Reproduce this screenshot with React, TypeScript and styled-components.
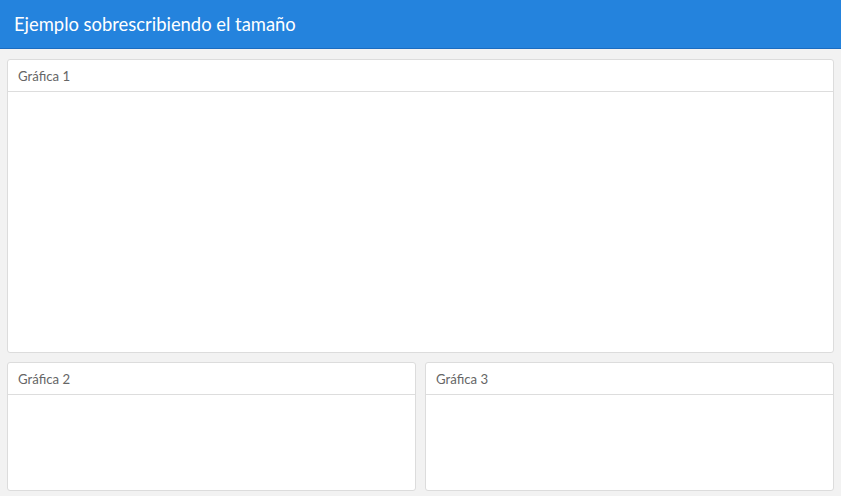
import React from "react";
import styled, { createGlobalStyle } from "styled-components";

const Global = createGlobalStyle`
  html, body { margin: 0; padding: 0; }
  body {
    background: #f2f2f2;
    font-family: Lato, "Open Sans", "Liberation Sans", sans-serif;
  }
`;

const Page = styled.div`
  display: flex;
  flex-direction: column;
  height: 496px;
`;

const Navbar = styled.header`
  height: 48px;
  flex: none;
  background: #2483dd;
  border-bottom: 1px solid #1b6cc0;
  display: flex;
  align-items: center;
  padding: 0 14px;
  box-sizing: content-box;
`;

const Title = styled.h1`
  margin: 0;
  font-size: 18.4px;
  font-weight: 400;
  color: #ffffff;
`;

const Main = styled.main`
  flex: 1;
  display: flex;
  flex-direction: column;
  gap: 9px;
  padding: 10px 7px 5px 7px;
  min-height: 0;
`;

const Row = styled.div<{ $h: number }>`
  display: flex;
  gap: 9px;
  height: ${(p) => p.$h}px;
  flex: none;
`;

const Card = styled.section`
  flex: 1;
  display: flex;
  flex-direction: column;
  background: #ffffff;
  border: 1px solid #dcdcdc;
  border-radius: 3px;
  box-sizing: border-box;
  overflow: hidden;
`;

const CardHeader = styled.div`
  height: 31px;
  flex: none;
  display: flex;
  align-items: center;
  padding: 0 10px;
  border-bottom: 1px solid #dddddd;
  font-size: 13.2px;
  color: #666666;
`;

const CardBody = styled.div`
  flex: 1;
`;

export default function App() {
  return (
    <>
      <Global />
      <Page>
        <Navbar>
          <Title>Ejemplo sobrescribiendo el tamaño</Title>
        </Navbar>
        <Main>
          <Row $h={294}>
            <Card>
              <CardHeader>Gráfica 1</CardHeader>
              <CardBody />
            </Card>
          </Row>
          <Row $h={129}>
            <Card>
              <CardHeader>Gráfica 2</CardHeader>
              <CardBody />
            </Card>
            <Card>
              <CardHeader>Gráfica 3</CardHeader>
              <CardBody />
            </Card>
          </Row>
        </Main>
      </Page>
    </>
  );
}
